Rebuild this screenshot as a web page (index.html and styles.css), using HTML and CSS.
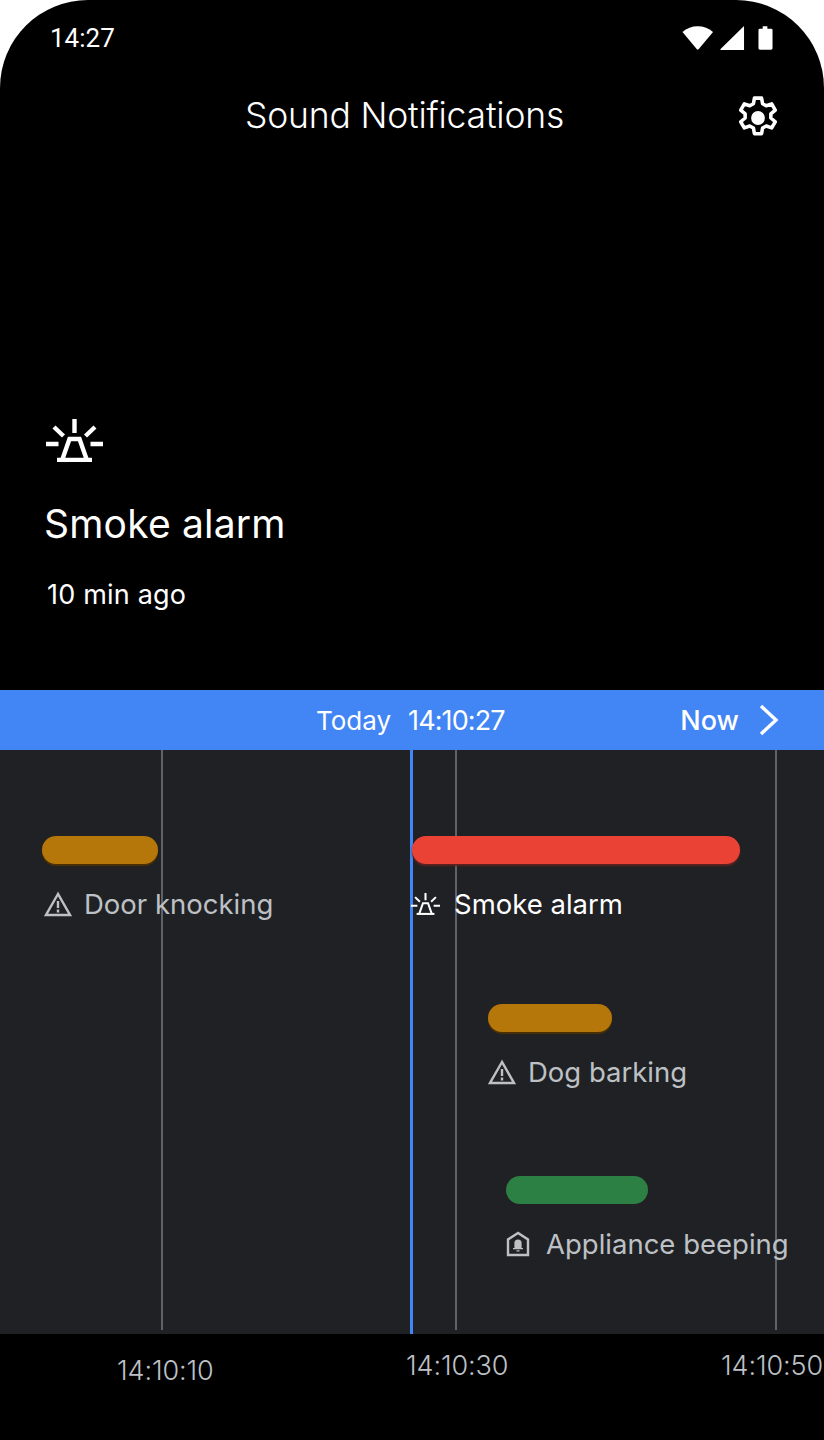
FILE: index.html
```html
<!DOCTYPE html>
<html lang="en">
<head>
    <meta charset="UTF-8">
    <meta name="viewport" content="width=device-width, initial-scale=1.0">
    <title>Sound Notifications</title>
    <link rel="stylesheet" href="styles.css">
</head>
<body>
    <div class="phone">
        <div class="status-bar">
            <span class="clock">14:27</span>
            <div class="status-icons">
                <svg class="icon-wifi" width="32" height="26" viewBox="0 0 34 26"><path d="M0.5 6.5C5 2.6 10.6 0.5 16.7 0.5S28.6 2.6 33 6.5L17.6 25a1.2 1.2 0 0 1-1.8 0z" fill="#fff"/></svg>
                <svg class="icon-signal" width="25" height="26" viewBox="0 0 26 26"><path d="M25 0.5V25.5H1a.6.6 0 0 1-.4-1z" fill="#fff"/></svg>
                <svg class="icon-battery" width="15" height="26" viewBox="0 0 16 26"><path d="M5 0.5h5V3h4a1.5 1.5 0 0 1 1.5 1.5V24a1.5 1.5 0 0 1-1.5 1.5H2A1.5 1.5 0 0 1 .5 24V4.5A1.5 1.5 0 0 1 2 3h3z" fill="#fff"/></svg>
            </div>
        </div>

        <header class="app-bar">
            <h1>Sound Notifications</h1>
            <svg class="settings" width="46" height="46" viewBox="0 0 44 44">
                <path d="M18.6 3h6.8l1 5.4 3.5 1.9 5.2-1.8 3.4 5.9-4.2 3.6v4l4.2 3.6-3.4 5.9-5.2-1.8-3.5 1.9-1 5.4h-6.8l-1-5.4-3.5-1.9-5.2 1.8-3.4-5.9 4.2-3.6v-4L5.5 14.4l3.4-5.9 5.2 1.8 3.5-1.9z" fill="none" stroke="#fff" stroke-width="3.4" stroke-linejoin="round"/>
                <circle cx="22" cy="22" r="6.6" fill="#fff"/>
            </svg>
        </header>

        <section class="hero">
            <svg class="hero-icon" width="57" height="43" viewBox="0 0 57 43">
                <g fill="none" stroke="#fff" stroke-width="4.400">
                    <path d="M28.500 0v14M8 8l9.500 9M49 8l-9.500 9M0 25h12.500M44.500 25H57"/>
                    <path d="M16.500 40l7-20h10l7 20"/>
                    <path d="M11 41h35"/>
                </g>
            </svg>
            <h2>Smoke alarm</h2>
            <p>10 min ago</p>
        </section>

        <div class="date-bar">
            <span class="date-text">Today</span>
            <span class="date-time">14:10:27</span>
            <span class="now">Now</span>
            <svg class="chevron" width="22" height="32" viewBox="0 0 22 32"><path d="M3 2l15 14L3 30" fill="none" stroke="#fff" stroke-width="3.400"/></svg>
        </div>

        <div class="timeline">
            <div class="gridline line-10"></div>
            <div class="gridline line-30"></div>
            <div class="gridline line-50"></div>
            <div class="playhead"></div>

            <div class="event door">
                <div class="bar bar-amber"></div>
                <div class="label">
                    <svg width="28" height="26" viewBox="0 0 28 26"><path d="M14 3L2 24h24z" fill="none" stroke="#bdc1c6" stroke-width="2.400"/><path d="M14 10v7M14 18.500v3" stroke="#bdc1c6" stroke-width="2.400" fill="none"/></svg>
                    <span>Door knocking</span>
                </div>
            </div>

            <div class="event smoke">
                <div class="bar bar-red"></div>
                <div class="label label-on">
                    <svg width="29" height="22" viewBox="0 0 57 43"><g fill="none" stroke="#fff" stroke-width="4"><path d="M28.500 0v14M8 8l9.500 9M49 8l-9.500 9M0 25h12.500M44.500 25H57"/><path d="M16.500 40l7-20h10l7 20"/><path d="M11 41h35"/></g></svg>
                    <span>Smoke alarm</span>
                </div>
            </div>

            <div class="event dog">
                <div class="bar bar-amber"></div>
                <div class="label">
                    <svg width="28" height="26" viewBox="0 0 28 26"><path d="M14 3L2 24h24z" fill="none" stroke="#bdc1c6" stroke-width="2.400"/><path d="M14 10v7M14 18.500v3" stroke="#bdc1c6" stroke-width="2.400" fill="none"/></svg>
                    <span>Dog barking</span>
                </div>
            </div>

            <div class="event appliance">
                <div class="bar bar-green"></div>
                <div class="label label-appliance">
                    <svg width="24" height="26" viewBox="0 0 24 26"><path d="M12 2L2 8.500V24h20V8.500z" fill="none" stroke="#bdc1c6" stroke-width="2.400"/><path d="M12 8.500a3.600 3.600 0 0 0-3.600 3.600V17H7v1.300h10V17h-1.400v-4.900A3.600 3.600 0 0 0 12 8.500zM10.500 19.200h3v1.300h-3z" fill="#bdc1c6"/></svg>
                    <span>Appliance beeping</span>
                </div>
            </div>
        </div>

        <div class="axis">
            <span class="tick tick-10">14:10:10</span>
            <span class="tick tick-30">14:10:30</span>
            <span class="tick tick-50">14:10:50</span>
        </div>
    </div>
</body>
</html>
```

FILE: styles.css
```css
* {
    box-sizing: border-box;
}
body {
    margin: 0;
    background-color: #fff;
    font-family: 'Inter', 'Noto Sans', sans-serif;
    color: #fff;
}
.phone {
    width: 824px;
    height: 1440px;
    display: flex;
    flex-direction: column;
    background-color: #000;
    border-radius: 88px 88px 0 0;
    overflow: hidden;
}
.status-bar {
    height: 76px;
    padding: 0 51px 0 50px;
    display: flex;
    align-items: center;
    justify-content: space-between;
}
.clock {
    font-family: 'Roboto', sans-serif;
    font-weight: 400;
    font-size: 26px;
}
.status-icons {
    display: flex;
    align-items: center;
    gap: 6px;
}
.icon-battery {
    margin-left: 7px;
}
.app-bar {
    height: 80px;
    padding: 0 43px 0 245px;
    display: flex;
    align-items: center;
    justify-content: space-between;
}
.app-bar h1 {
    margin: 0;
    font-size: 35.5px;
    font-weight: 300;
    line-height: 76px;
    letter-spacing: -0.2px;
}
.settings {
    margin-top: 4px;
}
.hero {
    height: 534px;
    padding: 263px 0 0 46px;
    display: flex;
    flex-direction: column;
    align-items: flex-start;
}
.hero h2 {
    margin: 36px 0 0 -2px;
    font-size: 39px;
    font-weight: 400;
    line-height: 52px;
    letter-spacing: 0.2px;
}
.hero p {
    margin: 28px 0 0 1px;
    font-size: 27px;
    line-height: 34px;
    letter-spacing: 0.2px;
}
.date-bar {
    height: 60px;
    padding-left: 316px;
    padding-right: 44px;
    display: flex;
    align-items: center;
    background-color: #4285f4;
    font-size: 26px;
}
.date-time {
    margin-left: 17px;
    font-size: 27px;
    letter-spacing: -0.9px;
}
.now {
    margin-left: auto;
    font-size: 27px;
    font-weight: 450;
}
.chevron {
    margin-left: 19px;
}
.timeline {
    height: 584px;
    position: relative;
    background-color: #202124;
}
.gridline {
    position: absolute;
    top: 0;
    bottom: 4px;
    width: 2px;
    background-color: #5f6368;
}
.line-10 {
    left: 161px;
}
.line-30 {
    left: 455px;
}
.line-50 {
    left: 775px;
}
.playhead {
    position: absolute;
    top: 0;
    bottom: 0;
    left: 410px;
    width: 3px;
    background-color: #4285f4;
}
.event {
    position: absolute;
}
.door {
    left: 42px;
    top: 86px;
}
.smoke {
    left: 412px;
    top: 86px;
}
.dog {
    left: 488px;
    top: 254px;
}
.appliance {
    left: 506px;
    top: 426px;
}
.bar {
    height: 28px;
    border-radius: 14px;
}
.door .bar {
    width: 116px;
}
.smoke .bar {
    width: 328px;
}
.dog .bar {
    width: 124px;
}
.appliance .bar {
    width: 142px;
}
.bar-amber {
    background-color: #b5760a;
    box-shadow: 0 2px 1px #4a3006;
}
.bar-red {
    background-color: #ea4335;
    box-shadow: 0 2px 2px #5e2420;
}
.bar-green {
    background-color: #2d8044;
}
.label {
    margin-top: 24px;
    display: flex;
    align-items: center;
    gap: 12px;
    height: 32px;
    font-size: 27.5px;
    color: #bdc1c6;
    white-space: nowrap;
}
.door .label {
    margin-left: 2px;
}
.label-on {
    color: #fff;
    gap: 14px;
    margin-left: -1px;
}
.label-appliance {
    gap: 16px;
}
.axis {
    flex: 1;
    position: relative;
    font-size: 27px;
    font-weight: 300;
    color: #bdc1c6;
    letter-spacing: -0.1px;
}
.tick {
    position: absolute;
    line-height: 34px;
}
.tick-10 {
    left: 117px;
    top: 20px;
}
.tick-30 {
    left: 406px;
    top: 15px;
}
.tick-50 {
    left: 721px;
    top: 15px;
}
```
